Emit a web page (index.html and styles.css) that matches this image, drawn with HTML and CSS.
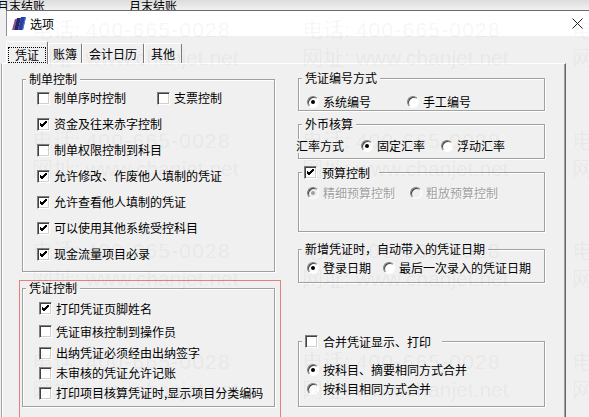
FILE: index.html
```html
<!DOCTYPE html>
<html lang="zh-CN">

<head>
  <meta charset="UTF-8" />
  <meta name="viewport" content="width=device-width, initial-scale=1.0" />
  <title>选项</title>
  <link rel="stylesheet" href="styles.css">
</head>

<body>
  <!-- window behind the dialog -->
  <div class="desk">
    <span>月末结账</span>
    <span>月末结账</span>
  </div>

  <div class="dialog">
    <div class="titlebar">
      <svg class="app-icon" viewBox="0 0 14 13">
        <polygon points="0,13 2,13 5,2 3,2" fill="#8a4f8f" />
        <polygon points="2,13 6,13 9,1 5,1" fill="#2b2466" />
        <polygon points="6,13 11,13 14,0 9,0" fill="#2440a8" />
        <polygon points="10,13 11,13 14,0 13,0" fill="#5a7ad8" />
      </svg>
      <span class="title">选项</span>
      <svg class="close" viewBox="0 0 11 11">
        <line x1="0.5" y1="0.5" x2="10.5" y2="10.5" />
        <line x1="10.5" y1="0.5" x2="0.5" y2="10.5" />
      </svg>
    </div>

    <div class="client">
      <div class="tabs">
        <div class="tab active"><span class="focus">凭证</span></div>
        <div class="tab">账簿</div>
        <div class="tab wide">会计日历</div>
        <div class="tab wide">其他</div>
      </div>

      <div class="panel">
        <div class="col col-left">
          <fieldset class="group g-make">
            <legend>制单控制</legend>
            <div class="row">
              <label class="opt"><span class="chk"></span>制单序时控制</label>
              <label class="opt next"><span class="chk"></span>支票控制</label>
            </div>
            <div class="row">
              <label class="opt"><span class="chk"><svg viewBox="0 0 11 11"><polyline points="2,4.5 4.2,6.8 8.8,2.2" /></svg></span>资金及往来赤字控制</label>
            </div>
            <div class="row">
              <label class="opt"><span class="chk"></span>制单权限控制到科目</label>
            </div>
            <div class="row">
              <label class="opt"><span class="chk"><svg viewBox="0 0 11 11"><polyline points="2,4.5 4.2,6.8 8.8,2.2" /></svg></span>允许修改、作废他人填制的凭证</label>
            </div>
            <div class="row">
              <label class="opt"><span class="chk"><svg viewBox="0 0 11 11"><polyline points="2,4.5 4.2,6.8 8.8,2.2" /></svg></span>允许查看他人填制的凭证</label>
            </div>
            <div class="row">
              <label class="opt"><span class="chk"><svg viewBox="0 0 11 11"><polyline points="2,4.5 4.2,6.8 8.8,2.2" /></svg></span>可以使用其他系统受控科目</label>
            </div>
            <div class="row">
              <label class="opt"><span class="chk"><svg viewBox="0 0 11 11"><polyline points="2,4.5 4.2,6.8 8.8,2.2" /></svg></span>现金流量项目必录</label>
            </div>
          </fieldset>

          <div class="marked">
            <fieldset class="group g-voucher">
              <legend>凭证控制</legend>
              <div class="row tall">
                <label class="opt"><span class="chk"><svg viewBox="0 0 11 11"><polyline points="2,4.5 4.2,6.8 8.8,2.2" /></svg></span>打印凭证页脚姓名</label>
              </div>
              <div class="row tall">
                <label class="opt"><span class="chk"></span>凭证审核控制到操作员</label>
              </div>
              <div class="row">
                <label class="opt"><span class="chk"></span>出纳凭证必须经由出纳签字</label>
              </div>
              <div class="row">
                <label class="opt"><span class="chk"></span>未审核的凭证允许记账</label>
              </div>
              <div class="row">
                <label class="opt"><span class="chk"></span>打印项目核算凭证时,显示项目分类编码</label>
              </div>
            </fieldset>
          </div>
        </div>

        <div class="col col-right">
          <fieldset class="group g-num">
            <legend>凭证编号方式</legend>
            <div class="row">
              <label class="opt"><span class="radio on"></span>系统编号</label>
              <label class="opt next"><span class="radio"></span>手工编号</label>
            </div>
          </fieldset>

          <fieldset class="group g-rate">
            <legend>外币核算</legend>
            <div class="row">
              <span class="rate-label">汇率方式</span>
              <label class="opt"><span class="radio on"></span>固定汇率</label>
              <label class="opt next"><span class="radio"></span>浮动汇率</label>
            </div>
          </fieldset>

          <fieldset class="group g-budget">
            <legend class="legend-chk"><span class="chk"><svg viewBox="0 0 11 11"><polyline points="2,4.5 4.2,6.8 8.8,2.2" /></svg></span>预算控制</legend>
            <div class="row">
              <label class="opt disabled"><span class="radio on"></span>精细预算控制</label>
              <label class="opt disabled next"><span class="radio"></span>粗放预算控制</label>
            </div>
          </fieldset>

          <fieldset class="group g-date">
            <legend>新增凭证时，自动带入的凭证日期</legend>
            <div class="row">
              <label class="opt"><span class="radio on"></span>登录日期</label>
              <label class="opt next"><span class="radio"></span>最后一次录入的凭证日期</label>
            </div>
          </fieldset>

          <fieldset class="group g-merge">
            <legend class="legend-chk"><span class="chk"></span>合并凭证显示、打印</legend>
            <div class="row">
              <label class="opt"><span class="radio on"></span>按科目、摘要相同方式合并</label>
            </div>
            <div class="row">
              <label class="opt"><span class="radio"></span>按科目相同方式合并</label>
            </div>
          </fieldset>
        </div>
      </div>
    </div>
  </div>

  <!-- vendor watermark tiled over the window -->
  <div class="watermark">
    <div>电话: <span class="tel">400-665-0028</span><br>网址: www.chanjet.net</div>
    <div>电话: <span class="tel">400-665-0028</span><br>网址: www.chanjet.net</div>
    <div>电话: <span class="tel">400-665-0028</span><br>网址: www.chanjet.net</div>
    <div>电话: <span class="tel">400-665-0028</span><br>网址: www.chanjet.net</div>
    <div>电话: <span class="tel">400-665-0028</span><br>网址: www.chanjet.net</div>
    <div>电话: <span class="tel">400-665-0028</span><br>网址: www.chanjet.net</div>
    <div>电话: <span class="tel">400-665-0028</span><br>网址: www.chanjet.net</div>
    <div>电话: <span class="tel">400-665-0028</span><br>网址: www.chanjet.net</div>
    <div>电话: <span class="tel">400-665-0028</span><br>网址: www.chanjet.net</div>
    <div>电话: <span class="tel">400-665-0028</span><br>网址: www.chanjet.net</div>
    <div>电话: <span class="tel">400-665-0028</span><br>网址: www.chanjet.net</div>
    <div>电话: <span class="tel">400-665-0028</span><br>网址: www.chanjet.net</div>
  </div>
</body>

</html>
```

FILE: styles.css
```css
:root {
  --face: #f0f0f0;
  --shadow: #a0a0a0;
  --dark-shadow: #696969;
  --highlight: #ffffff;
  --disabled: #a0a0a0;
}

* {
  box-sizing: border-box;
  margin: 0;
  padding: 0;
}

body {
  position: relative;
  width: 589px;
  height: 417px;
  overflow: hidden;
  font-family: "Noto Sans CJK SC", "Noto Sans", sans-serif;
  font-size: 12px;
  color: #000;
  background: var(--face);
}

/* strip of the main window peeking above the dialog */
.desk {
  display: flex;
  gap: 84px;
  height: 10px;
  overflow: hidden;
  line-height: 12px;
  background: linear-gradient(#dcdcdc, #f1f1f1);
}

.desk span:first-child {
  margin-left: -3px;
}

/* title bar */
.titlebar {
  display: flex;
  align-items: center;
  height: 26px;
  margin-left: 6px;
  padding: 0 6px 0 5px;
  background: #fff;
  border-top: 1px solid #6b6b6b;
  border-left: 1px solid #8f8f8f;
}

.app-icon {
  width: 14px;
  height: 13px;
  margin-right: 4px;
}

.title {
  line-height: 14px;
}

.close {
  width: 11px;
  height: 11px;
  margin-left: auto;
  stroke: #222;
  stroke-width: 1;
}

/* tab strip */
.tabs {
  display: flex;
  align-items: flex-end;
  height: 27px;
  padding-left: 6px;
}

.tab {
  height: 20px;
  padding: 0 4px;
  line-height: 19px;
  border: 1px solid var(--highlight);
  border-right-color: #7a7a7a;
  border-bottom: 0;
  border-radius: 2px 2px 0 0;
}

.tab.wide {
  padding: 0 6px;
}

.tab.active {
  position: relative;
  z-index: 1;
  height: 23px;
  margin-bottom: -1px;
  padding: 5px 1px 0;
  background: var(--face);
}

.focus {
  display: block;
  padding: 0 6px;
  line-height: 14px;
  border: 1px dotted #000;
}

.panel {
  display: flex;
  gap: 23px;
  height: 354px;
  margin: 0 23px 0 1px;
  padding-left: 20px;
  border-top: 1px solid var(--highlight);
  border-left: 1px solid var(--shadow);
  border-right: 1px solid var(--dark-shadow);
  box-shadow: inset 1px 0 0 var(--highlight), inset -1px 0 0 var(--shadow);
}

.col-left {
  width: 253px;
}

.col-right {
  width: 247px;
}

/* etched group boxes */
.group {
  min-width: 0;
  border: 1px solid var(--shadow);
  box-shadow: inset 1px 1px 0 var(--highlight), 1px 1px 0 var(--highlight);
}

.group legend {
  margin-left: 3px;
  padding: 0 3px;
  line-height: 12px;
  background: var(--face);
}

.group .legend-chk {
  display: flex;
  align-items: center;
  gap: 5px;
  height: 13px;
  padding: 0 9px 0 2px;
  line-height: 13px;
}

.row {
  display: flex;
  align-items: center;
}

.opt {
  display: flex;
  align-items: center;
  gap: 4px;
  line-height: 14px;
  white-space: nowrap;
}

.opt.disabled {
  color: var(--disabled);
  text-shadow: 1px 1px 0 #fff;
}

/* classic sunken check box */
.chk {
  flex: none;
  width: 13px;
  height: 13px;
  background: #fff;
  border: 1px solid;
  border-color: #808080 #fff #fff #808080;
  box-shadow: inset 1px 1px 0 #404040, inset -1px -1px 0 #d4d0c8;
}

.chk svg {
  display: block;
  width: 11px;
  height: 11px;
  fill: none;
  stroke: #000;
  stroke-width: 2.1;
  shape-rendering: crispEdges;
}

/* classic sunken radio button */
.radio {
  flex: none;
  display: grid;
  place-items: center;
  width: 12px;
  height: 12px;
  border-radius: 50%;
  background: #fff;
  border: 1px solid;
  border-color: #808080 #fff #fff #808080;
  box-shadow: inset 1px 1px 0 #404040;
}

.radio.on::after {
  content: "";
  width: 4px;
  height: 4px;
  border-radius: 50%;
  background: #000;
}

.disabled .radio {
  background: var(--face);
}

.disabled .radio.on::after {
  background: var(--disabled);
}

/* 制单控制 */
.g-make {
  margin-top: 9px;
  padding-bottom: 4px;
}

.g-make .row {
  height: 26px;
  padding-left: 14px;
}

.g-make .next {
  margin-left: 31px;
}

/* highlighted block round 凭证控制 */
.marked {
  margin: 8px -6px 0 -3px;
  padding: 0 5px 20px 2px;
  border: 1px solid #e3817f;
}

.g-voucher {
  margin-top: 1px;
  padding: 3px 0;
}

.g-voucher .row {
  height: 20px;
  padding-left: 16px;
}

.g-voucher .row.tall {
  height: 23px;
}

/* right column groups */
.g-num {
  margin-top: 8px;
  padding-top: 10px;
}

.g-num .row {
  height: 16px;
  padding-left: 8px;
}

.g-num .next {
  margin-left: 36px;
}

.g-rate {
  margin-top: 7px;
  padding: 8px 0 4px;
}

.g-rate .row {
  height: 16px;
}

.rate-label {
  margin-left: -3px;
  line-height: 14px;
  background: var(--face);
}

.g-rate .opt {
  margin-left: 17px;
}

.g-rate .next {
  margin-left: 16px;
}

.g-budget {
  margin-top: 7px;
  padding: 6px 0 30px;
}

.g-budget .row {
  height: 16px;
  padding-left: 8px;
}

.g-budget .next {
  margin-left: 15px;
}

.g-date {
  margin-top: 11px;
  padding: 5px 0 6px;
}

.g-date .row {
  height: 16px;
  padding-left: 8px;
}

.g-date .next {
  margin-left: 12px;
}

.g-merge {
  margin-top: 52px;
  padding: 12px 0 8px;
}

.g-merge .legend-chk {
  padding: 0 11px 0 3px;
}

.g-merge .row {
  height: 19px;
  padding-left: 8px;
}

/* faint tiled watermark */
.watermark {
  position: absolute;
  inset: 0;
  display: grid;
  grid-template-columns: repeat(3, 270px);
  grid-auto-rows: 110.7px;
  padding: 16px 0 0 32px;
  font-family: "Liberation Sans", "Noto Sans CJK SC", sans-serif;
  font-size: 21px;
  line-height: 28px;
  white-space: nowrap;
  color: rgba(0, 0, 0, 0.055);
  pointer-events: none;
}

.watermark .tel {
  letter-spacing: 1.2px;
}
```
